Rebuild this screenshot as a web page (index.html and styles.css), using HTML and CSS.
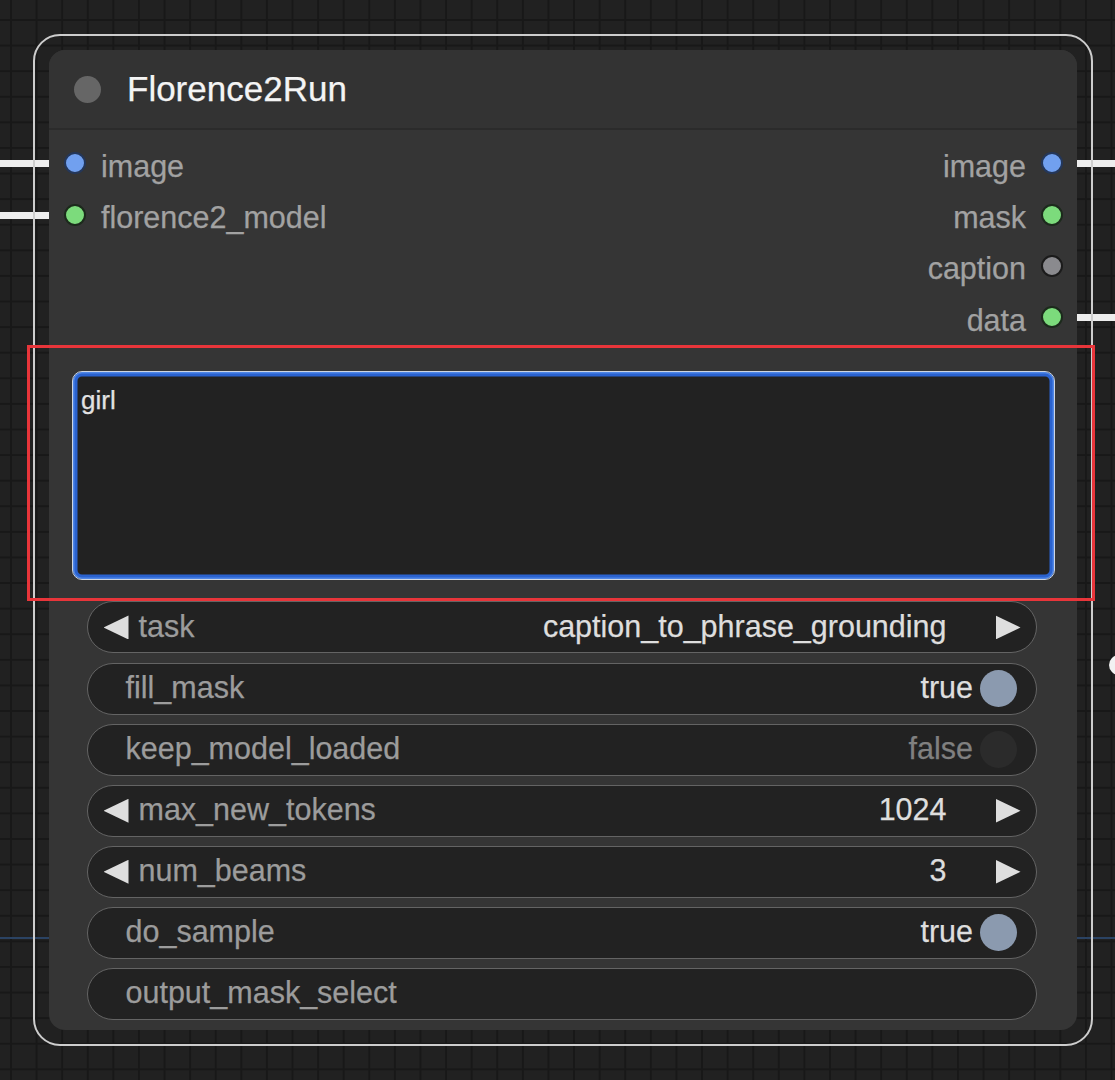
FILE: index.html
```html
<!DOCTYPE html>
<html>
<head>
<meta charset="utf-8">
<title>Florence2Run</title>
<link rel="stylesheet" href="styles.css">
</head>
<body>
<div class="canvas">
  <div class="link link-in-1"></div>
  <div class="link link-in-2"></div>
  <div class="link link-out-1"></div>
  <div class="link link-out-2"></div>
  <div class="wire-blue"></div>
  <div class="stub-dot"></div>

  <div class="node-outline">
    <div class="node">
      <div class="title">
        <span class="title-dot"></span>
        <span class="title-text">Florence2Run</span>
      </div>
      <div class="slots">
        <div class="slot-col">
          <div class="slot"><span class="dot dot-blue"></span><span class="slot-label">image</span></div>
          <div class="slot"><span class="dot dot-green"></span><span class="slot-label">florence2_model</span></div>
        </div>
        <div class="slot-col slot-col-out">
          <div class="slot"><span class="slot-label">image</span><span class="dot dot-blue"></span></div>
          <div class="slot"><span class="slot-label">mask</span><span class="dot dot-green"></span></div>
          <div class="slot"><span class="slot-label">caption</span><span class="dot dot-gray"></span></div>
          <div class="slot"><span class="slot-label">data</span><span class="dot dot-green"></span></div>
        </div>
      </div>
      <div class="prompt">girl</div>
      <div class="widgets">
        <div class="w">
          <span class="arr arr-left"></span>
          <span class="label">task</span>
          <span class="value value-num">caption_to_phrase_grounding</span>
          <span class="arr arr-right"></span>
        </div>
        <div class="w">
          <span class="label label-plain">fill_mask</span>
          <span class="value value-bool">true</span>
          <span class="knob knob-on"></span>
        </div>
        <div class="w">
          <span class="label label-plain">keep_model_loaded</span>
          <span class="value value-bool value-off">false</span>
          <span class="knob knob-off"></span>
        </div>
        <div class="w">
          <span class="arr arr-left"></span>
          <span class="label">max_new_tokens</span>
          <span class="value value-num">1024</span>
          <span class="arr arr-right"></span>
        </div>
        <div class="w">
          <span class="arr arr-left"></span>
          <span class="label">num_beams</span>
          <span class="value value-num">3</span>
          <span class="arr arr-right"></span>
        </div>
        <div class="w">
          <span class="label label-plain">do_sample</span>
          <span class="value value-bool">true</span>
          <span class="knob knob-on"></span>
        </div>
        <div class="w">
          <span class="label label-plain">output_mask_select</span>
        </div>
      </div>
    </div>
  </div>

  <div class="annotation"></div>
</div>
</body>
</html>
```

FILE: styles.css
```css
html, body {
  margin: 0;
  padding: 0;
  background: #212121;
}

.canvas {
  position: relative;
  width: 1115px;
  height: 1080px;
  overflow: hidden;
  box-sizing: border-box;
  padding: 34px 0 0 33px;
  font-family: "Liberation Sans", Arial, sans-serif;
  -webkit-text-stroke: 0.25px currentColor;
  background-color: #212121;
  background-image:
    linear-gradient(to right, #181818 2px, transparent 2px),
    linear-gradient(to bottom, #181818 2px, transparent 2px);
  background-size: 25.6px 25.6px;
  background-position: 10px 19px;
}

/* connection wires (drawn under the node) */
.link {
  position: absolute;
  height: 7px;
  background: #ededed;
  z-index: 0;
}
.link-in-1 { left: 0; top: 159.5px; width: 60px; }
.link-in-2 { left: 0; top: 212px; width: 60px; }
.link-out-1 { left: 1066px; top: 159.5px; width: 60px; }
.link-out-2 { left: 1066px; top: 314px; width: 60px; }

.wire-blue {
  position: absolute;
  left: 0;
  top: 937px;
  width: 1115px;
  height: 2px;
  background: #2b4363;
  z-index: 0;
}

.stub-dot {
  position: absolute;
  left: 1109px;
  top: 655px;
  width: 20px;
  height: 20px;
  border-radius: 50%;
  background: #f2f2f2;
  z-index: 0;
}

/* node */
.node-outline {
  position: relative;
  z-index: 1;
  width: 1060px;
  height: 1012px;
  box-sizing: border-box;
  border: 2px solid #cdcdcd;
  border-radius: 27px;
  padding: 14px;
}

.node {
  height: 980px;
  background: #353535;
  border-radius: 16px;
  display: flex;
  flex-direction: column;
  overflow: hidden;
}

.title {
  flex: none;
  height: 78px;
  display: flex;
  align-items: center;
  padding-left: 25px;
  background: #333333;
  border-bottom: 2px solid #2b2b2b;
}

.title-dot {
  width: 27px;
  height: 27px;
  border-radius: 50%;
  background: #666666;
  margin-right: 26px;
  flex: none;
}

.title-text {
  font-size: 35px;
  color: #f4f4f4;
}

/* slots */
.slots {
  flex: none;
  height: 213.2px;
  box-sizing: border-box;
  padding: 7.6px 14px 0 15px;
  display: flex;
  justify-content: space-between;
}

.slot-col {
  display: flex;
  flex-direction: column;
}

.slot-col-out {
  align-items: flex-end;
}

.slot {
  height: 51.4px;
  display: flex;
  align-items: center;
  gap: 15px;
  font-size: 30.5px;
  color: #a2a2a2;
}

.slot-label {
  line-height: 1;
  margin-top: 5.2px;
}

.dot {
  flex: none;
  width: 22px;
  height: 22px;
  border-radius: 50%;
  box-sizing: border-box;
  border: 2px solid #1b1b1b;
}
.dot-blue { background: #71a0ef; border-color: #24375a; }
.dot-green { background: #7cdb7c; border-color: #1c2a1c; }
.dot-gray { background: #8a8a8e; border-color: #1b1b1b; }

/* prompt textarea */
.prompt {
  flex: none;
  margin: 27.8px 22px 0 23px;
  height: 209px;
  box-sizing: border-box;
  border: 1.5px solid #cdd5e2;
  border-radius: 10px;
  box-shadow: inset 0 0 0 1.5px #4f86e6, inset 0 0 0 4.5px #2a62cf;
  background: #222222;
  padding: 13px 8px;
  font-size: 26px;
  line-height: 30px;
  color: #e2e2e2;
}

/* widgets */
.widgets {
  flex: none;
  padding: 21.5px 40px 0 38px;
  display: flex;
  flex-direction: column;
  gap: 9.1px;
}

.w {
  height: 52px;
  box-sizing: border-box;
  border: 1.5px solid #646464;
  border-radius: 26px;
  background: #222222;
  display: flex;
  align-items: center;
  padding: 0 15.5px;
  font-size: 30.5px;
}

.label {
  color: #9c9c9c;
  line-height: 1;
  margin-bottom: 3px;
  white-space: nowrap;
}

.label-plain {
  margin-left: 22px;
}

.arr {
  flex: none;
  width: 25px;
  height: 24px;
  background: #dedede;
}
.arr-left {
  clip-path: polygon(100% 0, 0 50%, 100% 100%);
  margin-right: 10px;
}
.arr-right {
  clip-path: polygon(0 0, 100% 50%, 0 100%);
}

.value {
  margin-left: auto;
  color: #dedede;
  line-height: 1;
  margin-bottom: 3px;
  white-space: nowrap;
}
.value-num {
  margin-right: 49px;
}
.value-bool {
  margin-right: 7px;
}
.value-off {
  color: #808080;
}

.knob {
  flex: none;
  width: 37px;
  height: 37px;
  border-radius: 50%;
  margin-right: 3.5px;
}
.knob-on { background: #8b9aaf; }
.knob-off { background: #2b2b2b; }

/* review annotation */
.annotation {
  position: absolute;
  left: 27px;
  top: 345px;
  width: 1068px;
  height: 256px;
  box-sizing: border-box;
  border: 3px solid #e8353a;
  z-index: 2;
}
```
